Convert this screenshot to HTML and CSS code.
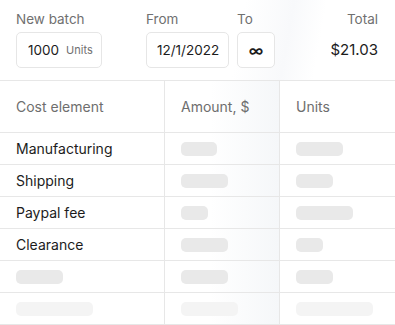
FILE: index.html
```html
<!DOCTYPE html>
<html lang="en">
<head>
    <meta charset="UTF-8">
    <meta name="viewport" content="width=device-width, initial-scale=1.0">
    <title>New batch - cost</title>
    <link rel="stylesheet" href="styles.css">
</head>
<body>
    <div class="batch-bar">
        <div class="field field-batch">
            <label>New batch</label>
            <div class="box box-batch">
                <span class="qty">1000</span>
                <span class="qty-unit">Units</span>
            </div>
        </div>
        <div class="field field-from">
            <label>From</label>
            <div class="box box-date">12/1/2022</div>
        </div>
        <div class="field field-to">
            <label>To</label>
            <div class="box box-inf">&infin;</div>
        </div>
        <div class="field field-total">
            <label>Total</label>
            <div class="total-value">$21.03</div>
        </div>
    </div>

    <div class="cost-table">
        <div class="cell head">Cost element</div>
        <div class="cell head col-amount">Amount, $</div>
        <div class="cell head col-units">Units</div>

        <div class="cell">Manufacturing</div>
        <div class="cell col-amount"><span class="skel" style="width:36px"></span></div>
        <div class="cell col-units"><span class="skel" style="width:47px"></span></div>

        <div class="cell">Shipping</div>
        <div class="cell col-amount"><span class="skel" style="width:47px"></span></div>
        <div class="cell col-units"><span class="skel" style="width:37px"></span></div>

        <div class="cell">Paypal fee</div>
        <div class="cell col-amount"><span class="skel" style="width:27px"></span></div>
        <div class="cell col-units"><span class="skel" style="width:57px"></span></div>

        <div class="cell">Clearance</div>
        <div class="cell col-amount"><span class="skel" style="width:47px"></span></div>
        <div class="cell col-units"><span class="skel" style="width:27px"></span></div>

        <div class="cell"><span class="skel" style="width:47px"></span></div>
        <div class="cell col-amount"><span class="skel" style="width:47px"></span></div>
        <div class="cell col-units"><span class="skel" style="width:37px"></span></div>

        <div class="cell faded"><span class="skel" style="width:77px"></span></div>
        <div class="cell col-amount faded"><span class="skel" style="width:57px"></span></div>
        <div class="cell col-units faded"><span class="skel" style="width:77px"></span></div>
    </div>
</body>
</html>
```

FILE: styles.css
```css
body {
    font-family: Inter, "Noto Sans", sans-serif;
    margin: 0;
    background-color: #fff;
    color: #1c1c1c;
    width: 395px;
    height: 325px;
    overflow: hidden;
}
.batch-bar {
    display: flex;
    align-items: flex-start;
    padding: 11px 17px 0 16px;
    height: 69px;
    border-bottom: 1px solid #e7e7e7;
    background: linear-gradient(100deg, #fff 60%, #f8f9fb 72%, #fff 80%);
}
.field label {
    display: block;
    font-size: 13.5px;
    line-height: 17px;
    color: #707070;
    margin-bottom: 4px;
}
.field-from {
    margin-left: 44px;
}
.field-to {
    margin-left: 8px;
}
.field-total {
    margin-left: auto;
    text-align: right;
}
.box {
    box-sizing: border-box;
    height: 36px;
    border: 1px solid #e6e6e6;
    border-radius: 5px;
    display: flex;
    align-items: center;
    font-size: 13.5px;
    background-color: #fff;
}
.box-batch {
    width: 86px;
    padding-left: 11px;
}
.qty-unit {
    font-size: 11px;
    color: #707070;
    margin-left: 7px;
}
.box-date {
    width: 83px;
    padding-left: 10px;
}
.box-inf {
    width: 38px;
    justify-content: center;
    font-size: 15px;
    font-weight: 600;
}
.total-value {
    font-size: 15px;
    line-height: 36px;
}
.cost-table {
    display: grid;
    grid-template-columns: 164px 115px 1fr;
}
.cell {
    height: 31px;
    border-bottom: 1px solid #e7e7e7;
    padding-left: 16px;
    display: flex;
    align-items: center;
    font-size: 14px;
}
.cell.head {
    height: 51px;
    color: #6e6e6e;
}
.col-amount,
.col-units {
    border-left: 1px solid #e7e7e7;
}
.col-amount {
    background: linear-gradient(90deg, #fff 40%, #f5f7f9 100%);
}
.skel {
    display: block;
    height: 14px;
    border-radius: 5px;
    background-color: #e9e9e9;
}
.faded .skel {
    background-color: #f4f4f4;
}
```
